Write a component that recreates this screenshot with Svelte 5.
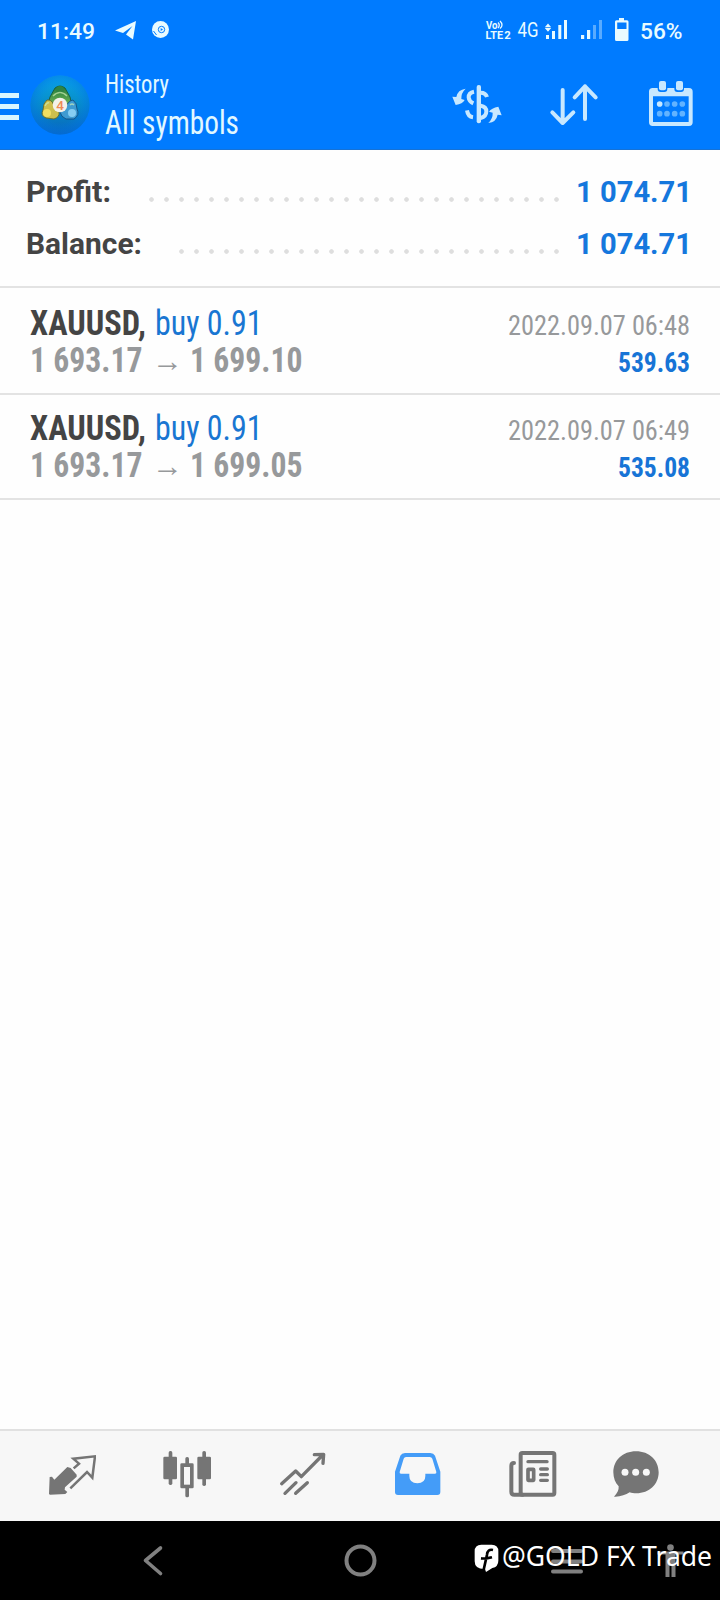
<script>
  const totals = [
    { label: 'Profit:', labelWidth: 85, value: '1 074.71', dots: 28, shift: 12.5 },
    { label: 'Balance:', labelWidth: 116, value: '1 074.71', dots: 26, shift: 12 }
  ];

  const deals = [
    { symbol: 'XAUUSD,', side: 'buy 0.91', open: '1 693.17', close: '1 699.10', time: '2022.09.07 06:48', profit: '539.63' },
    { symbol: 'XAUUSD,', side: 'buy 0.91', open: '1 693.17', close: '1 699.05', time: '2022.09.07 06:49', profit: '535.08' }
  ];
</script>

<!-- text squeezed to a fixed advance, for the condensed labels -->
{#snippet fit(text, width, height, baseline, kind)}
  <svg class="fit" {width} {height}>
    <text class={kind} x="0" y={baseline} textLength={width} lengthAdjust="spacingAndGlyphs">{text}</text>
  </svg>
{/snippet}

<div class="screen">
  <header>
    <div class="status">
      {@render fit('11:49', 58, 60, 38.700, 'clock')}
      <svg class="notify" width="60" height="60" viewBox="0 0 60 60">
        <path d="M2 30.500 23 21l-3 18.500-7-5 6.500-8.500-9.500 7z" fill="#e9fbff" />
        <circle cx="47.500" cy="29.500" r="8.500" fill="#e9fbff" />
        <circle cx="48.500" cy="29.500" r="3.200" fill="none" stroke="#007bff" stroke-width="1" />
        <path d="M47.700 28l2.300 1.500-2.300 1.500z" fill="#007bff" />
        <path d="M40.500 31l3 4" stroke="#007bff" stroke-width="1" />
      </svg>
      <svg class="signals" width="150" height="60" viewBox="484 0 150 60">
        <text class="lte" x="486" y="28.500" textLength="11.500" lengthAdjust="spacingAndGlyphs">Vo</text>
        <path d="M498 22.500q2.500 2.500 0 5.500M500 21q4 4 0 7.500" fill="none" stroke="#e9fbff" stroke-width="1.300" />
        <text class="lte" x="485.500" y="39" textLength="17.500" lengthAdjust="spacingAndGlyphs">LTE</text>
        <text class="lte small" x="504.200" y="39" textLength="6.500" lengthAdjust="spacingAndGlyphs">2</text>
        <text class="net" x="517.500" y="36.500" textLength="21" lengthAdjust="spacingAndGlyphs">4G</text>
        <g fill="#e9fbff">
          <path d="M548 23.500l3.200 3.700h-6.400zM548 31.800l3.200-3.700h-6.400z" />
          <path d="M546 35h3v4h-3zM552 31h3v8h-3zM558.300 25h3v14h-3zM564 20h3v19h-3z" />
          <path d="M581 35h3.200v4H581zM587 30h3.200v9H587z" />
          <path d="M593 25h3v14h-3zM599 20h3v19h-3z" opacity=".38" />
          <path d="M619 18h5v2.300h3a1.500 1.500 0 0 1 1.500 1.500v17.700a1.500 1.500 0 0 1-1.500 1.500h-10.500a1.500 1.500 0 0 1-1.500-1.500V21.800a1.500 1.500 0 0 1 1.500-1.500h2.500z" />
        </g>
        <path d="M617.200 22.500h9.300v6.500h-9.300z" fill="#007bff" />
      </svg>
      {@render fit('56%', 42.500, 60, 38.700, 'clock')}
    </div>

    <div class="appbar">
      <div class="burger"><i></i><i></i><i></i></div>
      <svg class="logo" width="60" height="60" viewBox="0 0 60 60">
        <defs>
          <linearGradient id="sky" x1="0" y1="0" x2="0" y2="1">
            <stop offset="0" stop-color="#0aa6e6" />
            <stop offset=".5" stop-color="#078bc8" />
            <stop offset="1" stop-color="#0865bc" />
          </linearGradient>
          <radialGradient id="rim">
            <stop offset=".6" stop-color="#007bff" stop-opacity="0" />
            <stop offset="1" stop-color="#0070e8" stop-opacity=".5" />
          </radialGradient>
          <linearGradient id="leaf" x1="0" y1="0" x2="0" y2="1">
            <stop offset="0" stop-color="#247a3c" />
            <stop offset="1" stop-color="#7cbf5b" />
          </linearGradient>
        </defs>
        <circle cx="30" cy="30" r="29.500" fill="url(#sky)" />
        <circle cx="30" cy="30" r="29.500" fill="url(#rim)" />
        <g stroke-width=".9">
          <path d="M25 13Q30 9 35 13L40 22Q43 31 37 34L22 33Q17 30 20 22z" fill="url(#leaf)" stroke="#155a3a" />
          <path d="M17 25Q22 24 24 31L29 37Q30 42 24 44L16 43Q10 40 13 35Q13 28 17 25z" fill="#cdbf4c" stroke="#5f6a2c" />
          <path d="M43 25Q38 26 36 32L30 37Q31 42 36 44L44 44Q50 40 47 34Q47 28 43 25z" fill="#3f9bd2" stroke="#124f82" />
        </g>
        <circle cx="30" cy="15" r="4" fill="#2f8442" />
        <circle cx="17" cy="38" r="4" fill="#f0df62" />
        <circle cx="42" cy="38" r="4" fill="#86cdf2" />
        <path d="M23 21q7-7 14 0M15 31q2-4 4-3M44 30q-2-2-4 0" fill="none" stroke="#cdecb2" stroke-width="1.500" opacity=".7" />
        <circle cx="30" cy="30" r="7.300" fill="#f3f1ea" />
        <text class="four" x="30" y="34.800">4</text>
      </svg>
      <div class="titles">
        {@render fit('History', 64, 40, 33, 'sub')}
        {@render fit('All symbols', 134, 49, 33.700, 'title')}
      </div>
      <div class="actions">
        <svg width="50" height="48" viewBox="66 240 150 144">
          <g fill="#c8e8ff">
            <path d="M107 266Q83 269 79 291L67 290 77 315Q98 312 104 300L94 297Q93 279 107 266z" />
            <path d="M175 369Q199 366 203 344L215 346 205 320Q184 324 177 335L188 338Q189 355 175 369z" />
            <rect x="140" y="255" width="13" height="115" rx="6" />
          </g>
          <path d="M132 275Q116 278 116 292 117 304 130 310M111 331Q114 350 129 352M152 278Q167 278 171 291M152 317Q169 320 169 334 169 350 152 354" fill="none" stroke="#c8e8ff" stroke-width="12" />
        </svg>
        <svg width="50" height="48" viewBox="357 240 150 144">
          <path d="M398 270v98M367 337l31 32 32-32M465 357v-98M434 292l31-33 32 33" fill="none" stroke="#c8e8ff" stroke-width="12" stroke-linecap="round" stroke-linejoin="round" />
        </svg>
        <svg width="50" height="48" viewBox="648 240 150 144">
          <rect x="663" y="270" width="119" height="102" rx="5" fill="none" stroke="#c8e8ff" stroke-width="12" />
          <path d="M663 268h119v21H663z" fill="#c8e8ff" />
          <rect x="683" y="240" width="29" height="36" rx="9" fill="#007bff" />
          <rect x="733" y="240" width="29" height="36" rx="9" fill="#007bff" />
          <rect x="687" y="243" width="21" height="28" rx="6" fill="#c8e8ff" />
          <rect x="738" y="243" width="21" height="28" rx="6" fill="#c8e8ff" />
          {#each [312, 341] as cy}
            {#each [689, 711, 734, 757] as cx}
              <circle {cx} {cy} r="8.500" fill={cx === 689 && cy === 312 ? '#c8e8ff' : '#62b3ff'} />
            {/each}
          {/each}
        </svg>
      </div>
    </div>
  </header>

  <section class="summary">
    {#each totals as t}
      <div class="total">
        {@render fit(t.label, t.labelWidth, 52, 41.500, 'label')}
        <div class="leader" style="width: {t.dots * 15}px; margin-right: {t.shift}px"></div>
        {@render fit(t.value, 116, 52, 41.500, 'amount')}
      </div>
    {/each}
  </section>

  <main>
    {#each deals as deal}
      <article>
        <div class="row">
          {@render fit(deal.symbol, 116, 50, 44.700, 'symbol')}
          <div class="side">{@render fit(deal.side, 107.500, 50, 44.700, 'lots')}</div>
          <div class="end">{@render fit(deal.time, 182, 50, 44.700, 'time')}</div>
        </div>
        <div class="row">
          {@render fit(deal.open, 112.500, 53, 31.700, 'price')}
          <div class="to">{@render fit('→', 31, 53, 31, 'arrow')}</div>
          {@render fit(deal.close, 112.500, 53, 31.700, 'price')}
          <div class="end">{@render fit(deal.profit, 72, 53, 31.700, 'profit')}</div>
        </div>
      </article>
    {/each}
  </main>

  <nav class="tabs">
    <svg width="48" height="48" viewBox="144 90 144 144">
      <path d="M149 171l7-1 7 9 39-38 10 3 18 20v6l-35 32-1 7 8 7-6 6-46 2-3-2z" fill="#757575" />
      <path d="M221 145l16-14-17-15 65-7-8 64-16-17-50 49" fill="none" stroke="#757575" stroke-width="7.500" />
    </svg>
    <svg width="48" height="48" viewBox="490 90 144 144">
      <g fill="#757575">
        <rect x="507" y="93" width="11" height="102" rx="5" />
        <rect x="491" y="110" width="41" height="68" rx="4" />
        <rect x="608" y="93" width="11" height="105" rx="5" />
        <rect x="593" y="110" width="41" height="68" rx="4" />
        <rect x="557" y="111" width="11" height="121" rx="5" />
        <rect x="542" y="130" width="40" height="75" rx="4" />
      </g>
      <rect x="553" y="141" width="18" height="53" fill="#f7f7f7" />
    </svg>
    <svg width="48" height="48" viewBox="836 90 144 144">
      <path d="M844 191l42-38 17 17 64-65M942 104l28-1-2 27M854 220l33-32M886 220l35-32" fill="none" stroke="#757575" stroke-width="10" stroke-linecap="round" stroke-linejoin="round" />
    </svg>
    <svg width="48" height="48" viewBox="102 90 144 144">
      <path d="M135 99h76q10 0 14 8l16 48v61q0 9-9 9H114q-9 0-9-9v-61l16-48q4-8 14-8z" fill="#449cf8" />
      <path d="M138 111h71q6 0 8 5l12 40q1 5-4 5h-29v7q0 22-24 22t-24-22v-7h-25q-5 0-4-5l12-40q2-5 7-5z" fill="#f7f7f7" />
    </svg>
    <svg width="48" height="48" viewBox="448 90 144 144">
      <g fill="none" stroke="#757575" stroke-width="12" stroke-linecap="round">
        <rect x="483" y="99" width="101" height="125" rx="5" />
        <path d="M463 129q-8 0-8 9v77q0 9 9 9h25" />
        <path d="M505 125h57" stroke-width="10" />
        <path d="M543 147h20M543 164h20M543 181h20" stroke-width="10" />
        <rect x="505" y="148" width="17" height="33" rx="1" stroke-width="11" />
      </g>
    </svg>
    <svg class="chat" width="48" height="48" viewBox="757 90 144 144">
      <path d="M829 94c40 0 68 27 68 63s-28 63-67 63c-8 0-14-1-20-3-12 8-29 14-47 13 10-10 15-20 14-31-10-10-16-25-16-42 0-36 28-63 68-63z" fill="#757575" />
      <g fill="#f7f7f7">
        <circle cx="796" cy="157" r="10.500" />
        <circle cx="828" cy="157" r="10.500" />
        <circle cx="860" cy="157" r="10.500" />
      </g>
    </svg>
  </nav>

  <footer>
    <svg class="keys" width="720" height="79" viewBox="0 0 720 79">
      <g fill="none" stroke="#808080" stroke-width="4" stroke-linecap="round" stroke-linejoin="round">
        <path d="M160.500 27l-15 12.500 15 13" stroke-width="3.600" />
        <circle cx="360.500" cy="39.500" r="14" />
        <path d="M553 30h28M553 40.500h28M553 50.500h28" />
      </g>
      <g fill="#808080">
        <circle cx="670.500" cy="26.500" r="3.300" />
        <path d="M657.500 30.500h26v3h-8V56h-4V44.500h-2V56h-4V33.500h-8z" />
      </g>
    </svg>
    <div class="credit">
      <svg width="25" height="28" viewBox="0 0 75 84">
        <path d="M22 2h31q20 0 20 20v28q0 18-18 22L36 84l-3-9Q2 76 2 52V22Q2 2 22 2z" fill="#fff" />
        <path d="M57 18q-16-4-18 14l-10 45M21 43q14 2 33-3" fill="none" stroke="#000" stroke-width="8" />
      </svg>
      {@render fit('@GOLD FX Trade', 210, 50, 32.500, 'handle')}
    </div>
  </footer>
</div>

<style>
  :global(body) {
    margin: 0;
    background: #fff;
  }

  .screen {
    display: flex;
    flex-direction: column;
    width: 720px;
    height: 1600px;
    overflow: hidden;
    font-family: Roboto, sans-serif;
    background: #fefefe;
  }

  svg {
    display: block;
    flex: none;
  }

  .fit {
    overflow: visible;
  }

  text {
    white-space: pre;
  }

  header {
    box-sizing: border-box;
    height: 150px;
    background: #007bff;
    border-bottom: 1px solid #1672d6;
  }

  .status {
    display: flex;
    height: 60px;
    padding: 0 38px 0 37px;
  }

  .notify {
    margin-left: 18px;
  }

  .signals {
    margin-left: auto;
    margin-right: 6px;
  }

  .clock {
    font-size: 22.5px;
    font-weight: 500;
    fill: #e9fbff;
  }

  .lte {
    font-size: 11px;
    font-weight: 700;
    fill: #e9fbff;
  }

  .lte.small {
    font-size: 10px;
  }

  .net {
    font-size: 20px;
    fill: #e9fbff;
  }

  .appbar {
    display: flex;
    height: 89px;
  }

  .burger {
    display: flex;
    flex-direction: column;
    gap: 6px;
    width: 19px;
    padding-top: 33px;
  }

  .burger i {
    height: 5px;
    background: #d9f6ff;
  }

  .logo {
    margin: 15px 0 0 11px;
  }

  .four {
    font-size: 13.5px;
    font-weight: 500;
    text-anchor: middle;
    fill: #ef8a55;
  }

  .titles {
    margin-left: 15px;
  }

  /* narrow cut where the installed Roboto has a width axis */
  .sub,
  .title,
  .symbol,
  .lots,
  .time,
  .price,
  .profit {
    font-family: "Roboto Condensed", Roboto, sans-serif;
    font-stretch: 75%;
  }

  .sub {
    font-size: 25px;
    fill: #e2f8ff;
  }

  .title {
    font-size: 32.5px;
    fill: #e2f8ff;
  }

  .actions {
    display: flex;
    gap: 47px;
    margin-left: auto;
    padding: 20px 24px 0 0;
  }

  .summary {
    box-sizing: border-box;
    height: 138px;
    padding: 10px 28px 0 26px;
    border-bottom: 2px solid #e3e3e3;
  }

  .total {
    display: flex;
  }

  .leader {
    height: 15px;
    margin-top: 32px;
    margin-left: auto;
    background: radial-gradient(circle at 7.500px 7.500px, #dedede 1.900px, transparent 2.700px) 0 0 / 15px 15px;
  }

  .label {
    font-size: 30px;
    font-weight: 700;
    fill: #444;
  }

  .amount {
    font-size: 30px;
    font-weight: 700;
    fill: #1577dd;
  }

  main {
    flex: 1;
    padding-top: 2px;
  }

  article {
    padding: 0 30px;
    border-bottom: 2px solid #e3e3e3;
  }

  .row {
    display: flex;
  }

  .side {
    margin-left: 9px;
  }

  .to {
    margin: 0 7px 0 9px;
  }

  .end {
    margin-left: auto;
  }

  .symbol {
    font-size: 34.5px;
    font-weight: 700;
    fill: #444;
  }

  .lots {
    font-size: 34.5px;
    fill: #1976d2;
  }

  .time {
    font-size: 28px;
    fill: #97999b;
  }

  .price {
    font-size: 34.5px;
    font-weight: 700;
    fill: #97999b;
  }

  .arrow {
    font-family: "Liberation Sans", sans-serif;
    font-size: 30px;
    font-weight: 700;
    fill: #97999b;
  }

  .profit {
    font-size: 28px;
    font-weight: 700;
    fill: #1774d6;
  }

  .tabs {
    box-sizing: border-box;
    display: flex;
    gap: 67.300px;
    height: 92px;
    padding: 19px 0 0 48px;
    background: #f7f7f7;
    border-top: 2px solid #e1e1e1;
  }

  .chat {
    margin-left: -12.200px;
  }

  footer {
    position: relative;
    height: 79px;
    background: #000;
  }

  .credit {
    position: absolute;
    top: 12px;
    right: 8px;
    display: flex;
    align-items: flex-start;
    gap: 3px;
  }

  .credit > svg:first-child {
    margin-top: 11px;
  }

  .handle {
    font-family: "Noto Sans", sans-serif;
    font-size: 27.5px;
    fill: #fff;
  }
</style>
